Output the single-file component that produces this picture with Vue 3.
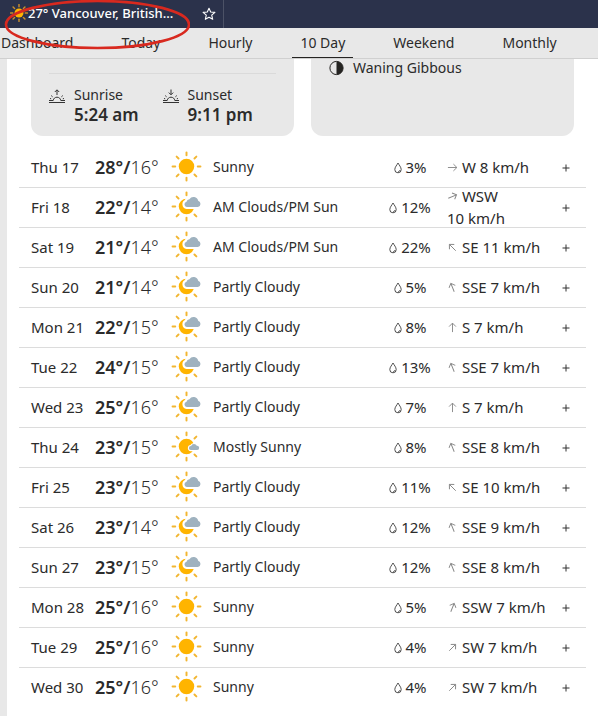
<script setup>
const tabs = ['Dashboard', 'Today', 'Hourly', '10 Day', 'Weekend', 'Monthly']
const activeTab = '10 Day'

const angles = { W: 90, WSW: 67, SW: 45, SSW: 22, S: 0, SSE: -22, SE: -45 }

const days = [
  ['Thu 17', 28, 16, 'Sunny', 3, 'W', 8],
  ['Fri 18', 22, 14, 'AM Clouds/PM Sun', 12, 'WSW', 10],
  ['Sat 19', 21, 14, 'AM Clouds/PM Sun', 22, 'SE', 11],
  ['Sun 20', 21, 14, 'Partly Cloudy', 5, 'SSE', 7],
  ['Mon 21', 22, 15, 'Partly Cloudy', 8, 'S', 7],
  ['Tue 22', 24, 15, 'Partly Cloudy', 13, 'SSE', 7],
  ['Wed 23', 25, 16, 'Partly Cloudy', 7, 'S', 7],
  ['Thu 24', 23, 15, 'Mostly Sunny', 8, 'SSE', 8],
  ['Fri 25', 23, 15, 'Partly Cloudy', 11, 'SE', 10],
  ['Sat 26', 23, 14, 'Partly Cloudy', 12, 'SSE', 9],
  ['Sun 27', 23, 15, 'Partly Cloudy', 12, 'SSE', 8],
  ['Mon 28', 25, 16, 'Sunny', 5, 'SSW', 7],
  ['Tue 29', 25, 16, 'Sunny', 4, 'SW', 7],
  ['Wed 30', 25, 16, 'Sunny', 4, 'SW', 7],
].map(([date, high, low, sky, rain, dir, speed]) => ({ date, high, low, sky, rain, dir, speed }))

const rays = [0, 45, 90, 135, 180, 225, 270, 315]

// Rays on the right side are hidden where a cloud covers them.
function raysFor(sky) {
  if (sky === 'Sunny') return rays
  if (sky === 'Mostly Sunny') return rays.filter((r) => r !== 90)
  return rays.filter((r) => r !== 45 && r !== 90)
}
</script>

<template>
  <div class="page">
    <header class="topbar">
      <a class="place" href="#">
        <svg class="place-sun" viewBox="0 0 30 30" aria-hidden="true">
          <circle cx="15" cy="15" r="7.5" fill="#ffb400" />
          <path
            v-for="r in rays"
            :key="r"
            d="M15 1v3.6"
            :transform="`rotate(${r} 15 15)`"
            stroke="#c98f2c"
            stroke-width="2.4"
            stroke-linecap="round"
          />
        </svg>
        <span>27° Vancouver, British...</span>
      </a>
      <button class="star" type="button" aria-label="Save location">
        <svg viewBox="0 0 14 14">
          <path
            d="M7 1.2l1.7 3.8 4.2.4-3.200 2.800 1 4.100L7 10.200l-3.700 2.100 1-4.100L1.100 5.400l4.200-.4z"
            fill="none"
            stroke="#fff"
            stroke-width="1.1"
            stroke-linejoin="round"
          />
        </svg>
      </button>
      <svg class="ring" viewBox="0 0 190 52" aria-hidden="true">
        <ellipse cx="97.5" cy="24.5" rx="91.5" ry="23.5" fill="none" stroke="#d8291f" stroke-width="2.6" />
      </svg>
    </header>

    <nav class="tabs">
      <a v-for="t in tabs" :key="t" href="#" :class="{ active: t === activeTab }">{{ t }}</a>
    </nav>

    <main class="content">
      <section class="cards">
        <div class="card">
          <div class="sun-times">
            <div class="sun-time">
              <svg viewBox="0 0 16 15" aria-hidden="true">
                <path d="M0 13.5h16M0 11.5h4.200M11.800 11.500H16M4.200 11.500c.3-2 1.800-3.300 3.800-3.300s3.500 1.300 3.800 3.300M8 6V1M5.800 3L8 .8 10.200 3M2.200 6.600l1.400 1.200M13.800 6.600l-1.400 1.200M1 9.500l1.200.3M15 9.500l-1.200.3" />
              </svg>
              <div>
                <div>Sunrise</div>
                <strong>5:24 am</strong>
              </div>
            </div>
            <div class="sun-time">
              <svg viewBox="0 0 16 15" aria-hidden="true">
                <path d="M0 13.5h16M0 11.5h4.200M11.800 11.500H16M4.200 11.500c.3-2 1.800-3.300 3.800-3.300s3.500 1.300 3.800 3.300M8 .5v5M5.800 3.600L8 5.800l2.200-2.200M2.200 6.600l1.400 1.200M13.800 6.600l-1.400 1.200M1 9.500l1.200.3M15 9.500l-1.200.3" />
              </svg>
              <div>
                <div>Sunset</div>
                <strong>9:11 pm</strong>
              </div>
            </div>
          </div>
        </div>
        <div class="card">
          <div class="moon">
            <svg viewBox="0 0 16 16" aria-hidden="true">
              <circle cx="7.5" cy="8" r="6.6" fill="none" stroke="#252422" />
              <path d="M7.5 1.4a6.600 6.600 0 0 1 0 13.200z" fill="#252422" />
            </svg>
            <span>Waning Gibbous</span>
          </div>
        </div>
      </section>

      <table class="forecast">
        <tbody>
          <tr v-for="d in days" :key="d.date">
            <th class="date" scope="row">{{ d.date }}</th>
            <td class="temp"><strong>{{ d.high }}°/</strong><span>{{ d.low }}°</span></td>
            <td class="icon">
              <svg viewBox="0 0 30 30" aria-hidden="true">
                <path
                  v-for="r in raysFor(d.sky)"
                  :key="r"
                  d="M15 1.500v2.600"
                  :transform="`rotate(${r} 15 15)`"
                  stroke="#f2b632"
                  stroke-width="1.9"
                  stroke-linecap="round"
                />
                <circle cx="15" cy="15" r="7.5" fill="#ffb400" />
                <path
                  v-if="d.sky === 'Mostly Sunny'"
                  d="M19.200 18.500a2 2 0 0 1 .2-4 3.100 3.100 0 0 1 5.600-.2 2.100 2.100 0 0 1 .3 4.200z"
                  fill="#9fb2bf"
                  stroke="#fff"
                  stroke-width="2"
                  paint-order="stroke"
                />
                <path
                  v-else-if="d.sky !== 'Sunny'"
                  d="M15.300 15.400a2.600 2.600 0 0 1-.3-5.100 3.100 3.100 0 0 1 2.800-2.400 4.700 4.700 0 0 1 8.500 1.500 3.100 3.100 0 0 1-.2 6z"
                  fill="#9fb2bf"
                  stroke="#fff"
                  stroke-width="4"
                  paint-order="stroke"
                />
              </svg>
            </td>
            <td class="sky">{{ d.sky }}</td>
            <td class="rain">
              <svg viewBox="0 0 8 12" aria-hidden="true">
                <path d="M4 1C3 3 .8 5.100 .8 7.600a3.200 3.200 0 0 0 6.400 0C7.200 5.100 5 3 4 1z" fill="none" stroke="#3c3c3c" stroke-width=".9" />
                <path d="M4.200 9.600c1 0 1.600-.6 1.700-1.600" fill="none" stroke="#3c3c3c" stroke-width=".9" />
              </svg>
              {{ d.rain }}%
            </td>
            <td class="wind">
              <div>
                <p>
                  <svg viewBox="0 0 12 12" aria-hidden="true">
                    <path d="M6 11V1.300M2.300 5L6 1.200 9.700 5" :transform="`rotate(${angles[d.dir]} 6 6)`" />
                  </svg>
                  {{ d.dir }} {{ d.speed }}&nbsp;km/h
                </p>
              </div>
            </td>
            <td class="more">
              <button type="button" :aria-label="`More about ${d.date}`">
                <svg viewBox="0 0 8 8"><path d="M4 .5v7M.5 4h7" stroke="#333" /></svg>
              </button>
            </td>
          </tr>
        </tbody>
      </table>
    </main>
  </div>
</template>

<style>
body {
  margin: 0;
  background: #fff;
}
</style>

<style scoped>
.page {
  display: flex;
  flex-direction: column;
  min-height: 100vh;
  overflow: hidden;
  color: #2b2b2b;
  font: 15px/20px "Noto Sans", sans-serif;
}
a {
  color: inherit;
  text-decoration: none;
}
button {
  display: inline-flex;
  padding: 0;
  border: 0;
  background: none;
}
.topbar {
  position: relative;
  display: flex;
  height: 28px;
  background: #2b324b;
}
.place {
  display: flex;
  align-items: center;
  width: 184px;
  padding: 0 0 2px 10px;
  color: #fff;
  font-size: 13px;
  font-weight: 500;
  white-space: nowrap;
}
.place-sun {
  width: 18px;
  height: 18px;
}
.star {
  align-items: center;
  justify-content: center;
  width: 30px;
  border-right: 1px solid #4c5266;
}
.star svg {
  width: 14px;
  height: 14px;
}
.ring {
  position: absolute;
  top: 0;
  left: 0;
  width: 190px;
  height: 52px;
  pointer-events: none;
}
.tabs {
  display: flex;
  gap: 32px;
  height: 30px;
  margin-left: -8px;
  padding-left: 1px;
  background: #e8e8e8;
  border-bottom: 1px solid #d0d0d0;
}
.tabs a {
  padding: 0 8px;
  font-size: 14px;
  line-height: 29px;
  white-space: nowrap;
}
.tabs .active {
  border-bottom: 1px solid #252422;
}
.content {
  flex: 1;
  padding: 0 12px;
  border-left: 7px solid #e8e8e8;
}
.cards {
  display: grid;
  grid-template-columns: 1fr 1fr;
  gap: 17px;
  padding: 0 12px;
}
.card {
  height: 77px;
  padding: 0 18px;
  border-radius: 0 0 12px 12px;
  background: #e8e8e8;
}
.sun-times {
  display: grid;
  grid-template-columns: 1fr 1fr;
  margin-top: 14px;
  padding-top: 11px;
  border-top: 1px solid #dadada;
}
.sun-time {
  display: flex;
  gap: 9px;
  font-size: 14px;
}
.sun-time svg {
  width: 16px;
  height: 15px;
  margin-top: 4px;
  fill: none;
  stroke: #333;
}
.sun-time strong {
  font-size: 17px;
  font-weight: 600;
}
.moon {
  display: flex;
  align-items: center;
  gap: 8px;
  font-size: 14px;
  line-height: 18px;
}
.moon svg {
  width: 16px;
  height: 16px;
}
.forecast {
  width: 100%;
  margin-top: 12px;
  border-spacing: 0;
  table-layout: fixed;
}
th,
td {
  height: 37px;
  padding: 0 0 2px;
  border-bottom: 1px solid #dcdcdc;
  font-weight: 400;
  text-align: left;
  white-space: nowrap;
}
tr:last-child > * {
  border-bottom-color: transparent;
}
.date {
  width: 64px;
  padding-left: 12px;
}
.temp {
  width: 76px;
  font-size: 18px;
}
.temp strong {
  font-weight: 600;
}
.temp span {
  font-weight: 300;
}
.icon {
  width: 42px;
}
.icon svg {
  display: block;
  width: 31px;
  height: 31px;
}
.sky {
  font-size: 14px;
}
.rain {
  width: 70px;
  padding-right: 2px;
  text-align: center;
}
.rain svg {
  width: 8px;
  height: 12px;
  vertical-align: -1px;
}
.wind {
  width: 99px;
}
.wind div {
  display: flex;
  align-items: center;
  height: 37px;
}
.wind p {
  margin: 0;
  line-height: 22px;
  white-space: normal;
}
.wind svg {
  width: 11px;
  height: 11px;
  fill: none;
  stroke: #858585;
}
.more {
  width: 40px;
  text-align: center;
}
.more button {
  vertical-align: middle;
}
.more svg {
  width: 8px;
  height: 8px;
}
</style>
